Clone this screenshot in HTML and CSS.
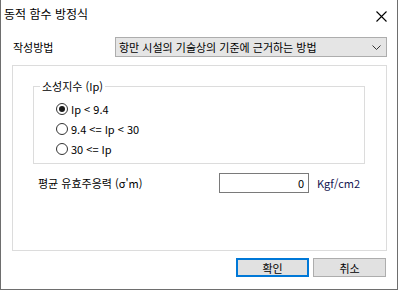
FILE: index.html
```html
<!DOCTYPE html>
<html lang="ko">
<head>
<meta charset="utf-8">
<link rel="stylesheet" href="styles.css">
</head>
<body>
<div class="window">
  <div class="titlebar">
    <span class="title">동적 함수 방정식</span>
    <svg class="close" width="11" height="11" viewBox="0 0 11 11"><path d="M0.5 0.5 L10.5 10.5 M10.5 0.5 L0.5 10.5" stroke="#000" stroke-width="1.1" fill="none"/></svg>
  </div>
  <div class="method-row">
    <span class="method-label">작성방법</span>
    <div class="select">
      <span class="select-text">항만 시설의 기술상의 기준에 근거하는 방법</span>
      <svg class="chevron" width="9" height="5" viewBox="0 0 9 5"><path d="M0.5 0.5 L4.5 4.5 L8.5 0.5" stroke="#333" stroke-width="1" fill="none"/></svg>
    </div>
  </div>
  <div class="panel">
    <fieldset class="group">
      <legend>소성지수 (Ip)</legend>
      <div class="radios">
        <label class="radio"><span class="circle checked"></span>Ip &lt; 9.4</label>
        <label class="radio"><span class="circle"></span>9.4 &lt;= Ip &lt; 30</label>
        <label class="radio"><span class="circle"></span>30 &lt;= Ip</label>
      </div>
    </fieldset>
    <div class="stress-row">
      <span class="stress-label">평균 유효주응력 (σ'm)</span>
      <div class="input">0</div>
      <span class="unit">Kgf/cm2</span>
    </div>
  </div>
  <div class="buttons">
    <div class="btn primary">확인</div>
    <div class="btn">취소</div>
  </div>
</div>
</body>
</html>
```
FILE: styles.css
```css
html, body {
  margin: 0;
  padding: 0;
  background: #fff;
}
.window {
  width: 398px;
  height: 290px;
  box-sizing: border-box;
  border: 1px solid #6e6e6e;
  border-top: none;
  background: #fff;
  font-family: "Noto Sans CJK KR", sans-serif;
  font-size: 11px;
  color: #000;
  display: flex;
  flex-direction: column;
}
.titlebar {
  height: 29px;
  display: flex;
  align-items: flex-start;
  justify-content: space-between;
  padding-left: 3px;
}
.title {
  font-size: 12px;
  line-height: 16px;
  margin-top: 6px;
}
.close {
  margin-top: 11px;
  margin-right: 10px;
}
.method-row {
  display: flex;
  align-items: center;
  margin-top: 8px;
  padding-left: 12px;
}
.method-label {
  width: 102px;
  line-height: 20px;
}
.select {
  width: 272px;
  height: 20px;
  box-sizing: border-box;
  border: 1px solid #adadad;
  background: #e5e5e5;
  display: flex;
  align-items: center;
  justify-content: space-between;
  padding-left: 3px;
  padding-right: 5px;
}
.select-text {
  line-height: 18px;
}
.panel {
  margin-top: 8px;
  margin-left: 11px;
  width: 375px;
  height: 186px;
  box-sizing: border-box;
  border: 1px solid #dcdcdc;
  padding-top: 13px;
}
.group {
  margin: 0 0 0 20px;
  width: 332px;
  box-sizing: border-box;
  border: 1px solid #dcdcdc;
  padding: 0 0 4px 6px;
  min-inline-size: 0;
}
.group legend {
  padding: 0 2px;
  line-height: 14px;
}
.radios {
  display: flex;
  flex-direction: column;
  padding-left: 16px;
  padding-top: 6px;
}
.radio {
  display: flex;
  align-items: center;
  height: 20px;
  line-height: 20px;
}
.circle {
  width: 12px;
  height: 12px;
  box-sizing: border-box;
  border: 1px solid #333;
  border-radius: 50%;
  margin-right: 3px;
  display: flex;
  align-items: center;
  justify-content: center;
}
.circle.checked::after {
  content: "";
  width: 6px;
  height: 6px;
  border-radius: 50%;
  background: #1a1a1a;
}
.stress-row {
  display: flex;
  align-items: center;
  margin-top: 9px;
  padding-left: 25px;
}
.stress-label {
  width: 181px;
}
.input {
  width: 90px;
  height: 20px;
  box-sizing: border-box;
  border: 1px solid #7a7a7a;
  text-align: right;
  padding-right: 4px;
  line-height: 18px;
}
.unit {
  margin-left: 8px;
  color: #141450;
}
.buttons {
  display: flex;
  justify-content: flex-end;
  gap: 4px;
  margin-top: 7px;
  padding-right: 11px;
}
.btn {
  width: 73px;
  height: 19px;
  box-sizing: border-box;
  border: 1px solid #adadad;
  background: #e1e1e1;
  display: flex;
  align-items: center;
  justify-content: center;
}
.btn.primary {
  border: 2px solid #0078d7;
}
```
